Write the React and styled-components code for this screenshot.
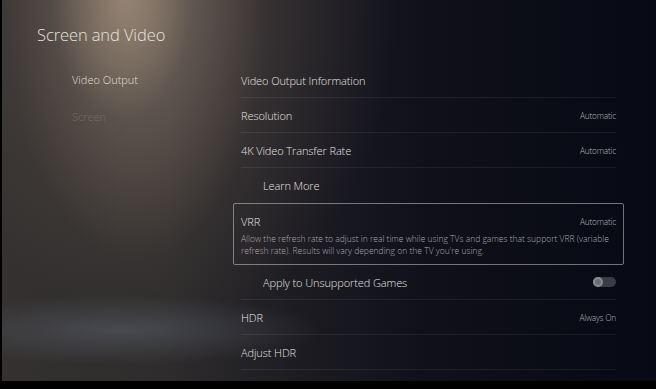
import React, { useState } from 'react'
import styled, { createGlobalStyle } from 'styled-components';

const Global = createGlobalStyle`
    html, body { margin: 0; padding: 0; background: #000; }
    body { font-family: "Open Sans", "Noto Sans", sans-serif; }
`

const Frame = styled.div`
    width: 656px;
    height: 389px;
    background: #000;
    padding: 0 0 8px 2px;
    box-sizing: border-box;
    overflow: hidden;
`

const Screen = styled.div`
    height: 100%;
    box-sizing: border-box;
    padding: 25px 0 0 35px;
    background:
        radial-gradient(ellipse 70px 120px at 120px 0px, rgba(190, 168, 145, 0.45), rgba(190, 168, 145, 0) 100%),
        radial-gradient(ellipse 130px 260px at 135px 0px, rgba(165, 145, 125, 0.45), rgba(165, 145, 125, 0) 100%),
        radial-gradient(ellipse 240px 330px at 155px 0px, rgba(120, 105, 95, 0.45), rgba(120, 105, 95, 0) 100%),
        radial-gradient(ellipse 200px 35px at 120px 330px, rgba(95, 102, 115, 0.5), rgba(95, 102, 115, 0) 100%),
        linear-gradient(90deg, #343130 0%, #2e2c2c 25%, #1d1c22 45%, #0f101a 65%, #070914 100%);
`

const Title = styled.h1`
    margin: 0;
    font-size: 16.5px;
    line-height: 20px;
    font-weight: 300;
    color: #e6e3df;
    letter-spacing: -0.1px;
`

const Body = styled.div`
    display: grid;
    grid-template-columns: 204px 383px;
    margin-top: 18px;
`

const Nav = styled.div`
    display: flex;
    flex-direction: column;
    padding-left: 35px;
`

const NavItem = styled.div`
    height: 37px;
    margin-top: ${p => p.first ? '-2px' : '0'};
    display: flex;
    align-items: center;
    font-size: 11px;
    font-weight: 300;
    color: ${p => p.dim ? '#726c66' : '#e2dfdb'};
`

const List = styled.div`
    display: flex;
    flex-direction: column;
    width: 375px;
`

const Row = styled.div`
    height: 35px;
    box-sizing: border-box;
    display: flex;
    align-items: center;
    justify-content: space-between;
    padding-left: ${p => p.indent ? '22px' : '0'};
    border-bottom: 1px solid ${p => p.noLine ? 'transparent' : 'rgba(255,255,255,0.07)'};
`

const Label = styled.span`
    font-size: 11px;
    font-weight: 300;
    color: #e4e2e0;
    letter-spacing: -0.1px;
`

const Value = styled.span`
    font-size: 8.3px;
    font-weight: 300;
    color: #b4b4b8;
    letter-spacing: -0.2px;
`

const Focus = styled.div`
    margin: 0 -8px;
    height: 62px;
    box-sizing: border-box;
    border: 1px solid rgba(200, 200, 205, 0.55);
    border-radius: 2px;
    padding: 9px 7px 0 7px;
`

const FocusHead = styled.div`
    display: flex;
    justify-content: space-between;
    align-items: center;
    height: 16px;
`

const Desc = styled.p`
    margin: 4px 0 0;
    font-size: 8.5px;
    font-weight: 300;
    line-height: 12px;
    color: #a9a8ac;
    letter-spacing: 0;
`

const Toggle = styled.div`
    width: 23px;
    height: 10px;
    border-radius: 5px;
    background: #3a3b46;
    position: relative;
    &::after {
        content: '';
        position: absolute;
        left: 0;
        top: 0;
        width: 6px;
        height: 6px;
        border-radius: 50%;
        background: #6c6c74;
        border: 2px solid #8c8c94;
    }
`

const App = () => {
    const [items] = useState([
        { label: 'Video Output Information' },
        { label: 'Resolution', value: 'Automatic' },
        { label: '4K Video Transfer Rate', value: 'Automatic' },
    ])

    return (
        <Frame>
            <Global />
            <Screen>
                <Title>Screen and Video</Title>
                <Body>
                    <Nav>
                        <NavItem first>Video Output</NavItem>
                        <NavItem dim>Screen</NavItem>
                    </Nav>
                    <List>
                        {items.map(it => (
                            <Row key={it.label}>
                                <Label>{it.label}</Label>
                                {it.value && <Value>{it.value}</Value>}
                            </Row>
                        ))}
                        <Row indent noLine>
                            <Label>Learn More</Label>
                        </Row>
                        <Focus>
                            <FocusHead>
                                <Label>VRR</Label>
                                <Value>Automatic</Value>
                            </FocusHead>
                            <Desc>
                                Allow the refresh rate to adjust in real time while using TVs and games that support VRR (variable refresh rate). Results will vary depending on the TV you're using.
                            </Desc>
                        </Focus>
                        <Row indent>
                            <Label>Apply to Unsupported Games</Label>
                            <Toggle />
                        </Row>
                        <Row>
                            <Label>HDR</Label>
                            <Value>Always On</Value>
                        </Row>
                        <Row>
                            <Label>Adjust HDR</Label>
                        </Row>
                    </List>
                </Body>
            </Screen>
        </Frame>
    )
}

export default App
